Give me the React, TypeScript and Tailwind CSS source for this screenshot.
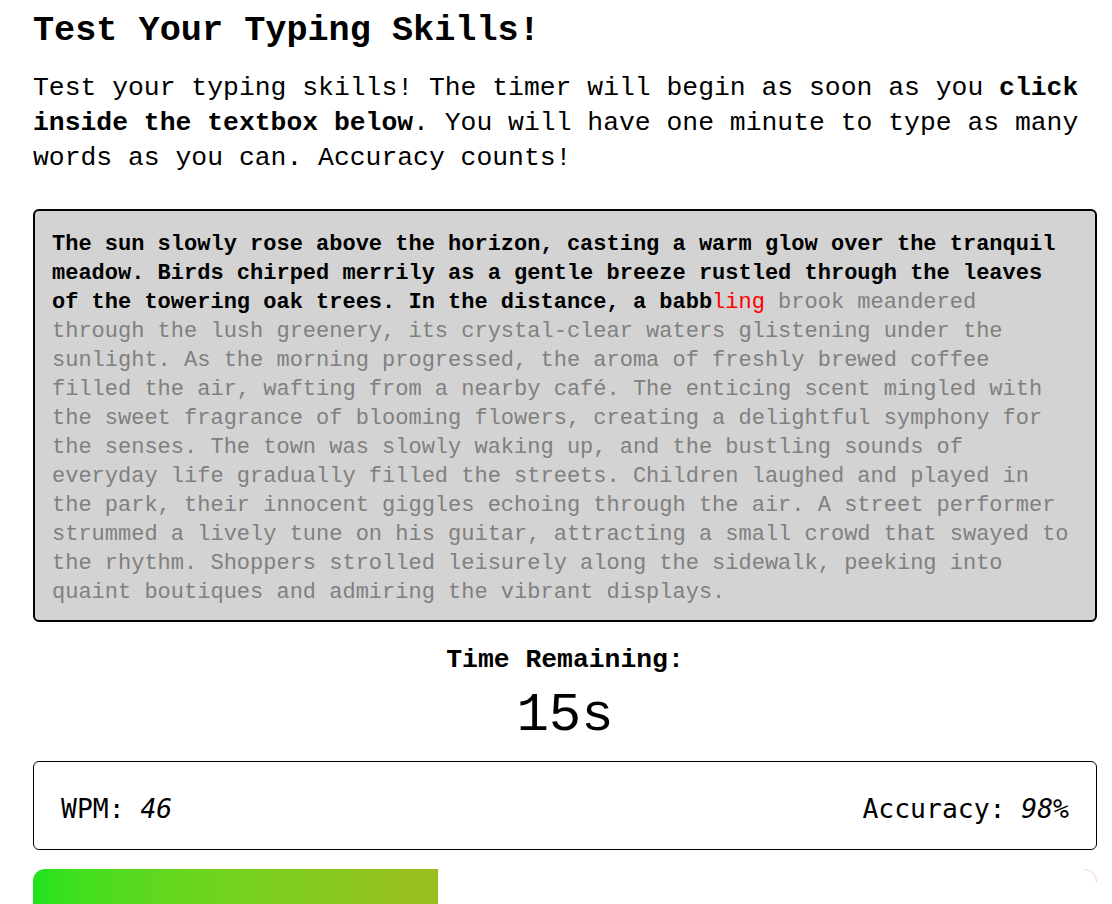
import React from "react";

const typedBold =
  "The sun slowly rose above the horizon, casting a warm glow over the tranquil meadow. Birds chirped merrily as a gentle breeze rustled through the leaves of the towering oak trees. In the distance, a babb";
const wrong = "ling";
const rest =
  " brook meandered through the lush greenery, its crystal-clear waters glistening under the sunlight. As the morning progressed, the aroma of freshly brewed coffee filled the air, wafting from a nearby café. The enticing scent mingled with the sweet fragrance of blooming flowers, creating a delightful symphony for the senses. The town was slowly waking up, and the bustling sounds of everyday life gradually filled the streets. Children laughed and played in the park, their innocent giggles echoing through the air. A street performer strummed a lively tune on his guitar, attracting a small crowd that swayed to the rhythm. Shoppers strolled leisurely along the sidewalk, peeking into quaint boutiques and admiring the vibrant displays.";

export default function App() {
  return (
    <div className="min-h-[904px] bg-white text-black px-[33px] pr-[15px] overflow-hidden font-['Liberation_Mono','DejaVu_Sans_Mono',monospace]">
      <h1 className="pt-[11px] text-[35.2px] leading-[40px] font-bold">
        Test Your Typing Skills!
      </h1>
      <p className="mt-[20px] text-[26.4px] leading-[35px]">
        Test your typing skills! The timer will begin as soon as you{" "}
        <b>click inside the textbox below</b>. You will have one minute to type as many
        words as you can. Accuracy counts!
      </p>
      <div className="mt-[33px] rounded-[6px] border-2 border-black bg-[#d3d3d3] px-[17px] pt-[19px] pb-[13px] text-[22px] leading-[29px]">
        <span className="font-bold text-black">{typedBold}</span>
        <span className="text-[#ff0000]">{wrong}</span>
        <span className="text-[#808080]">{rest}</span>
      </div>
      <div className="mt-[22px] text-center text-[26.4px] leading-[32px] font-bold">
        Time Remaining:
      </div>
      <div className="mt-[10px] text-center text-[54px] leading-[60px]">15s</div>
      <div className="mt-[15px] flex h-[89px] items-center justify-between rounded-[6px] border border-black px-[27px] pt-[6px] text-[26.4px] font-['DejaVu_Sans_Mono',monospace]">
        <span>
          WPM: <i>46</i>
        </span>
        <span>
          Accuracy: <i>98%</i>
        </span>
      </div>
      <div className="relative mt-[19px] h-[40px] overflow-hidden rounded-t-[12px]">
        <div className="h-full w-[405px] bg-linear-to-r from-[#1ee31e] to-[#9bbe1f]" />
        <svg
          className="absolute right-0 top-0"
          width="14"
          height="14"
          viewBox="0 0 14 14"
        >
          <path d="M1 0.5 A12 12 0 0 1 13.5 13" fill="none" stroke="#f7c6d2" strokeWidth="1" />
        </svg>
      </div>
    </div>
  );
}
